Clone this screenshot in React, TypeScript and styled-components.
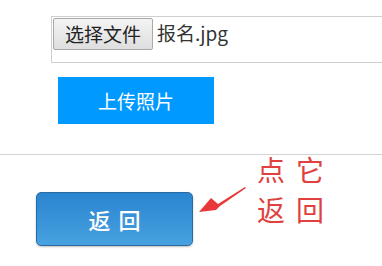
import React from 'react';
import styled, { createGlobalStyle } from 'styled-components';

const GlobalStyle = createGlobalStyle`
  html, body {
    margin: 0;
    padding: 0;
    background: #fff;
    overflow: hidden;
  }
  body {
    font-family: "Noto Sans CJK SC", "Noto Sans", sans-serif;
  }
`;

const Page = styled.div`
  width: 382px;
  height: 266px;
  overflow: hidden;
`;

const UploadSection = styled.div`
  padding: 16px 0 0 51px;
  height: 154px;
  box-sizing: border-box;
`;

const FileBox = styled.div`
  display: flex;
  align-items: flex-start;
  gap: 4px;
  width: 360px;
  height: 47px;
  padding: 1px;
  box-sizing: border-box;
  border: 1px solid #cfcfcf;
`;

const ChooseButton = styled.button`
  width: 100px;
  height: 32px;
  padding: 0;
  border: 1px solid #a9a9a9;
  border-radius: 2px;
  background: linear-gradient(#f4f4f4, #dedede);
  color: #222;
  font-family: "Noto Sans CJK SC", sans-serif;
  font-size: 19px;
  line-height: 30px;
`;

const FileName = styled.span`
  color: #333;
  font-size: 19px;
  line-height: 30px;
`;

const UploadButton = styled.button`
  display: block;
  margin: 14px 0 0 7px;
  width: 156px;
  height: 47px;
  border: none;
  background: #0099ff;
  color: #fff;
  font-family: "Noto Sans CJK SC", sans-serif;
  font-size: 19px;
  font-weight: 400;
`;

const Divider = styled.hr`
  margin: 0;
  border: none;
  border-top: 1px solid #d3d3d3;
`;

const BottomRow = styled.div`
  display: flex;
  align-items: flex-start;
  padding-left: 36px;
`;

const BackButton = styled.button`
  margin-top: 37px;
  width: 157px;
  height: 54px;
  border: 1px solid #2a6aa3;
  border-radius: 5px;
  background: linear-gradient(#2a84d0, #47a2e0);
  box-shadow: 0 1px 2px rgba(0, 0, 0, 0.25);
  color: #fff;
  font-family: "Noto Sans CJK SC", sans-serif;
  font-size: 22px;
  font-weight: 500;
  letter-spacing: 8px;
  text-indent: 8px;
`;

const ArrowIcon = styled.svg`
  margin: 30px 0 0 3px;
  flex: none;
`;

const Note = styled.div`
  margin: -6px 0 0 9px;
  color: #e0413f;
  font-size: 28px;
  line-height: 40px;
  letter-spacing: 11px;
`;

export default function App() {
  return (
    <Page>
      <GlobalStyle />
      <UploadSection>
        <FileBox>
          <ChooseButton>选择文件</ChooseButton>
          <FileName>报名.jpg</FileName>
        </FileBox>
        <UploadButton>上传照片</UploadButton>
      </UploadSection>
      <Divider />
      <BottomRow>
        <BackButton>返回</BackButton>
        <ArrowIcon width="52" height="32" viewBox="0 0 52 32">
          <path d="M49 2 L22 19 L15 13 L3 27 L20 25 L24 21 L50 3 Z" fill="#e8383a" />
        </ArrowIcon>
        <Note>
          <div>点它</div>
          <div>返回</div>
        </Note>
      </BottomRow>
    </Page>
  );
}
